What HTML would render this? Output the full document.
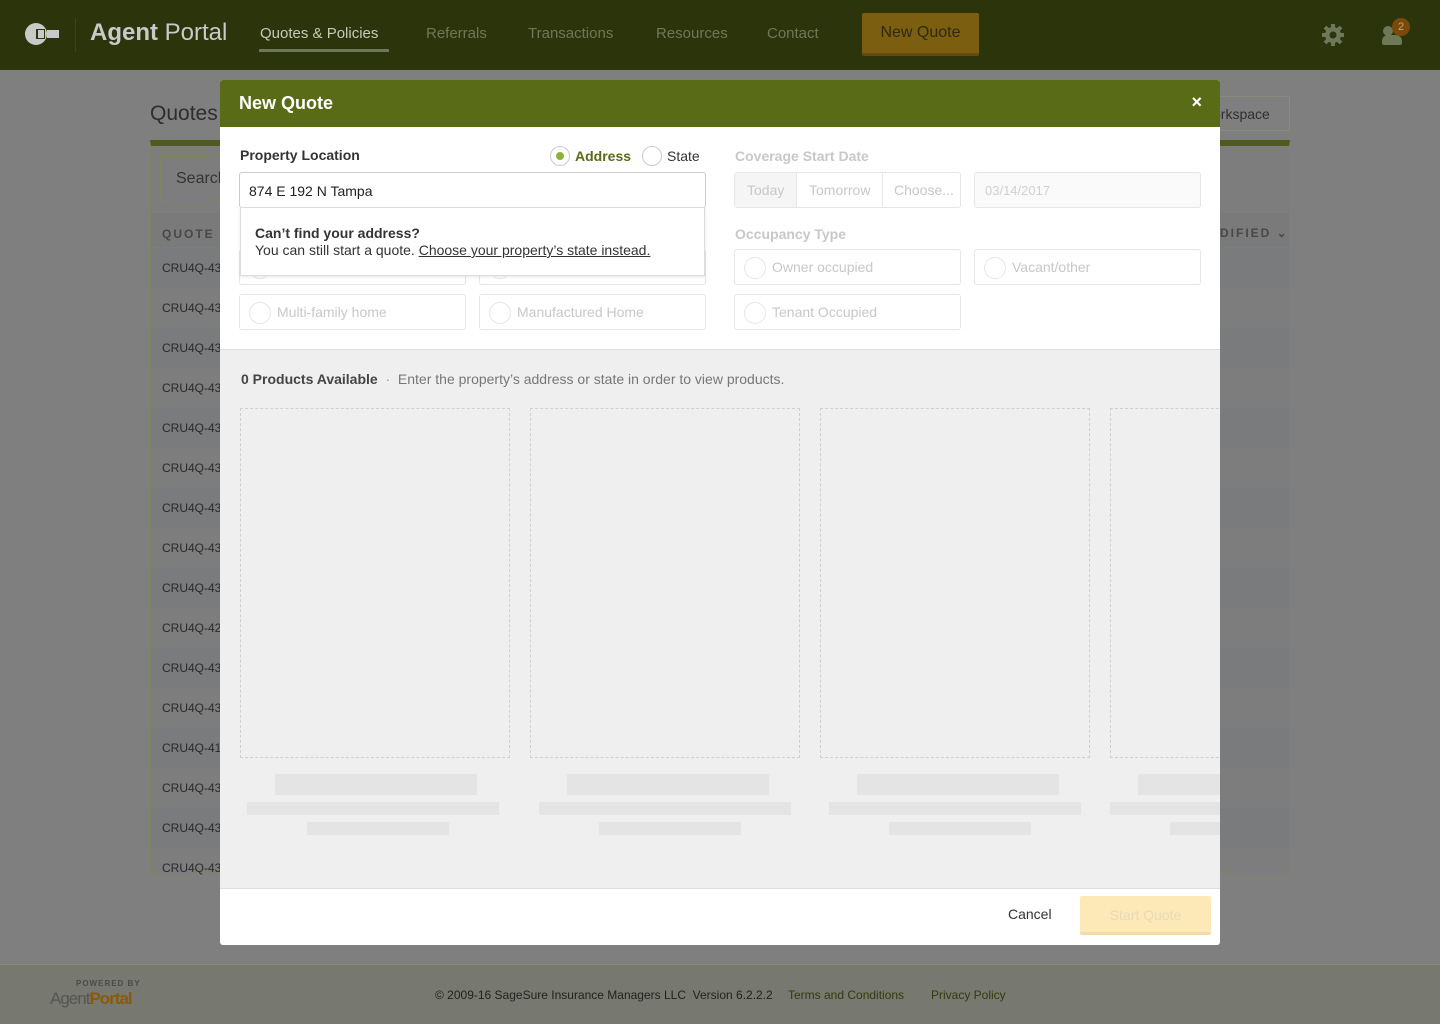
<!DOCTYPE html>
<html><head><meta charset="utf-8"><style>
*{box-sizing:border-box;margin:0;padding:0}
body{width:1440px;height:1024px;overflow:hidden;background:#7f7f7f;font-family:"Liberation Sans",sans-serif;position:relative;font-size:14px}
.hdr{position:absolute;left:0;top:0;width:1440px;height:70px;background:#2c340b}
.hdr .nav{position:absolute;top:25px;font-size:15px;color:#6f7759}
.abs{position:absolute}
.row{position:absolute;left:151px;width:1138px;height:40px;font-size:12px;color:#2a2a2a;padding:13px 11px}
.modal{position:absolute;left:220px;top:80px;width:1000px;height:865px;background:#fff;overflow:hidden;border-radius:3px}
.mh{height:47px;background:#5a6b17;color:#fff;font-weight:bold;font-size:18px;padding:13px 19px}
.lbl{position:absolute;font-weight:bold;font-size:14px;color:#333}
.box{position:absolute;border:1px solid #e6e6e6;border-radius:3px;height:36px;font-size:14px;color:#c8c8c8;padding:9px 0 0 37px}
.box:before{content:"";position:absolute;left:9px;top:7px;width:20px;height:20px;border:1px solid #e6e6e6;border-radius:50%}
.card{position:absolute;top:328px;width:270px;height:350px;border:1px dashed #cfcfcf}
.sk{position:absolute;background:#e4e4e4}
</style></head><body>
<div class="hdr">
<svg class="abs" style="left:25px;top:22px" width="36" height="24"><circle cx="11" cy="12" r="11" fill="#c9c9c9"/><rect x="11" y="7" width="9" height="10" fill="#2c340b"/><rect x="13" y="8" width="6" height="8" fill="#c9c9c9"/><rect x="22" y="8" width="12" height="8" fill="#c9c9c9"/></svg>
<div class="abs" style="left:75px;top:18px;width:1px;height:34px;background:#3c4419"></div>
<div class="abs" style="left:90px;top:19px;font-size:24px;color:#c9c9c9"><b>Agent</b> Portal</div>
<div class="nav" style="left:260px;color:#c7c9bc">Quotes &amp; Policies</div>
<div class="abs" style="left:259px;top:49px;width:130px;height:3px;background:#6f7759"></div>
<div class="nav" style="left:426px">Referrals</div>
<div class="nav" style="left:528px">Transactions</div>
<div class="nav" style="left:656px">Resources</div>
<div class="nav" style="left:767px">Contact</div>
<div class="abs" style="left:862px;top:13px;width:117px;height:43px;background:#7c5e10;border-bottom:3px solid #6a4a0a;border-radius:2px;color:#2c2a10;font-size:16px;padding:11px 0;text-align:center">New Quote</div>
<svg class="abs" style="left:1321px;top:23px" width="24" height="24" viewBox="0 0 24 24"><g fill="#6f7759"><circle cx="12" cy="12" r="8"/><g stroke="#6f7759" stroke-width="4"><line x1="12" y1="1" x2="12" y2="23"/><line x1="1" y1="12" x2="23" y2="12"/><line x1="4" y1="4" x2="20" y2="20"/><line x1="20" y1="4" x2="4" y2="20"/></g></g><circle cx="12" cy="12" r="3.5" fill="#2c340b"/></svg>
<div class="abs" style="left:1383px;top:26px;width:10px;height:10px;border-radius:50%;background:#6f7759"></div>
<div class="abs" style="left:1382px;top:35px;width:20px;height:10px;border-radius:6px 6px 2px 2px;background:#6f7759"></div>
<div class="abs" style="left:1392px;top:18px;width:18px;height:18px;border-radius:50%;background:#7a4a0a;color:#c9a070;font-size:11px;text-align:center;line-height:18px">2</div>
</div>
<div class="abs" style="left:150px;top:102px;font-size:21px;color:#2e2e2e">Quotes &amp;</div>
<div class="abs" style="left:1200px;top:96px;width:90px;height:35px;border:1px solid #8a8a80;font-size:14px;color:#2e2e2e;padding:9px 0 0 12px">orkspace</div>
<div class="abs" style="left:150px;top:140px;width:1140px;height:734px;border:1px solid #7e8560;border-top:6px solid #4f5a1f;background:#7d7d7d"></div>
<div class="abs" style="left:160px;top:156px;width:80px;height:46px;border:1px solid #7e8560;font-size:16px;color:#333;padding:13px 15px">Search</div>
<div class="abs" style="left:151px;top:213px;width:1138px;height:34px;background:#7a7a7a"></div>
<div class="abs" style="left:162px;top:227px;font-size:12px;letter-spacing:2px;color:#484848;font-weight:bold">QUOTE #</div>
<div class="abs" style="left:1220px;top:226px;font-size:12px;letter-spacing:2px;color:#484848;font-weight:bold">DIFIED ⌄</div>
<div class="row" style="top:248px;background:#7a7b7c">CRU4Q-432</div>
<div class="row" style="top:288px">CRU4Q-432</div>
<div class="row" style="top:328px;background:#7a7b7c">CRU4Q-432</div>
<div class="row" style="top:368px">CRU4Q-432</div>
<div class="row" style="top:408px;background:#7a7b7c">CRU4Q-439</div>
<div class="row" style="top:448px">CRU4Q-432</div>
<div class="row" style="top:488px;background:#7a7b7c">CRU4Q-432</div>
<div class="row" style="top:528px">CRU4Q-432</div>
<div class="row" style="top:568px;background:#7a7b7c">CRU4Q-434</div>
<div class="row" style="top:608px">CRU4Q-423</div>
<div class="row" style="top:648px;background:#7a7b7c">CRU4Q-433</div>
<div class="row" style="top:688px">CRU4Q-432</div>
<div class="row" style="top:728px;background:#7a7b7c">CRU4Q-413</div>
<div class="row" style="top:768px">CRU4Q-431</div>
<div class="row" style="top:808px;background:#7a7b7c">CRU4Q-431</div>
<div class="row" style="top:848px">CRU4Q-432</div>
<div class="abs" style="left:0;top:964px;width:1440px;height:60px;background:#77786f;border-top:1px solid #8a8d70"></div>
<div class="abs" style="left:76px;top:979px;font-size:8px;letter-spacing:1px;color:#4a4a4a;font-weight:bold">POWERED BY</div>
<div class="abs" style="left:50px;top:989px;font-size:17px;color:#555;letter-spacing:-1px">Agent<b style="color:#8a5a0a">Portal</b></div>
<div class="abs" style="left:435px;top:988px;font-size:12px;color:#222">© 2009-16 SageSure Insurance Managers LLC &nbsp;Version 6.2.2.2</div>
<div class="abs" style="left:788px;top:988px;font-size:12px;color:#343a0c">Terms and Conditions</div>
<div class="abs" style="left:931px;top:988px;font-size:12px;color:#343a0c">Privacy Policy</div>

<div class="modal">
<div class="mh">New Quote<span style="position:absolute;right:18px;top:12px;font-size:18px">×</span></div>
<div class="lbl" style="left:20px;top:67px">Property Location</div>
<div class="abs" style="left:330px;top:66px;width:20px;height:20px;border:1px solid #ccc;border-radius:50%"><div style="margin:5px;width:8px;height:8px;border-radius:50%;background:#8fb03a"></div></div>
<div class="abs" style="left:355px;top:68px;font-weight:bold;color:#5a6b17">Address</div>
<div class="abs" style="left:422px;top:66px;width:20px;height:20px;border:1px solid #ccc;border-radius:50%"></div>
<div class="abs" style="left:447px;top:68px;color:#333">State</div>
<div class="abs" style="left:19px;top:92px;width:467px;height:36px;border:1px solid #ccc;border-radius:3px;padding:10px 9px;font-size:14px;color:#222">874 E 192 N Tampa</div>
<div class="box" style="left:19px;top:169px;width:227px"></div>
<div class="box" style="left:259px;top:169px;width:227px"></div>
<div class="abs" style="left:20px;top:127px;width:465px;height:69px;background:#fff;border:1px solid #ddd;box-shadow:0 1px 3px rgba(0,0,0,.1);padding:17px 14px;font-size:14px;color:#333;line-height:17px"><b>Can’t find your address?</b><br>You can still start a quote. <u>Choose your property’s state instead.</u></div>
<div class="box" style="left:19px;top:214px;width:227px">Multi-family home</div>
<div class="box" style="left:259px;top:214px;width:227px">Manufactured Home</div>
<div class="lbl" style="left:515px;top:68px;color:#c8c8c8">Coverage Start Date</div>
<div class="abs" style="left:514px;top:92px;width:227px;height:36px;border:1px solid #e6e6e6;border-radius:3px;font-size:14px;color:#c8c8c8">
<span class="abs" style="left:0;top:0;width:62px;height:34px;background:#f5f5f5;border-right:1px solid #e6e6e6;padding:9px 12px">Today</span>
<span class="abs" style="left:62px;top:0;width:86px;height:34px;border-right:1px solid #e6e6e6;padding:9px 12px">Tomorrow</span>
<span class="abs" style="left:159px;top:9px">Choose...</span></div>
<div class="abs" style="left:754px;top:92px;width:227px;height:36px;border:1px solid #e6e6e6;border-radius:3px;background:#fafafa;padding:10px;font-size:13px;color:#d0d0d0">03/14/2017</div>
<div class="lbl" style="left:515px;top:146px;color:#c8c8c8">Occupancy Type</div>
<div class="box" style="left:514px;top:169px;width:227px">Owner occupied</div>
<div class="box" style="left:754px;top:169px;width:227px">Vacant/other</div>
<div class="box" style="left:514px;top:214px;width:227px">Tenant Occupied</div>
<div class="abs" style="left:0;top:269px;width:1000px;height:540px;background:#efefef;border-top:1px solid #ddd;border-bottom:1px solid #ddd"></div>
<div class="abs" style="left:21px;top:291px;font-size:14px;color:#444"><b>0 Products Available</b> <span style="color:#999">&nbsp;·&nbsp;</span> <span style="color:#777">Enter the property’s address or state in order to view products.</span></div>
<div class="card" style="left:20px"></div><div class="card" style="left:310px"></div><div class="card" style="left:600px"></div><div class="card" style="left:890px"></div>
<div class="sk" style="left:55px;top:694px;width:202px;height:21px"></div><div class="sk" style="left:27px;top:722px;width:252px;height:13px"></div><div class="sk" style="left:87px;top:742px;width:142px;height:13px"></div>
<div class="sk" style="left:347px;top:694px;width:202px;height:21px"></div><div class="sk" style="left:319px;top:722px;width:252px;height:13px"></div><div class="sk" style="left:379px;top:742px;width:142px;height:13px"></div>
<div class="sk" style="left:637px;top:694px;width:202px;height:21px"></div><div class="sk" style="left:609px;top:722px;width:252px;height:13px"></div><div class="sk" style="left:669px;top:742px;width:142px;height:13px"></div>
<div class="sk" style="left:918px;top:694px;width:202px;height:21px"></div><div class="sk" style="left:890px;top:722px;width:252px;height:13px"></div><div class="sk" style="left:950px;top:742px;width:142px;height:13px"></div>
<div class="abs" style="left:788px;top:826px;font-size:14px;color:#333">Cancel</div>
<div class="abs" style="left:860px;top:816px;width:131px;height:39px;background:#fde9b8;border-bottom:3px solid #f1dca8;border-radius:2px;text-align:center;padding-top:11px;font-size:14px;color:#e8d8b8">Start Quote</div>
</div>
</body></html>
